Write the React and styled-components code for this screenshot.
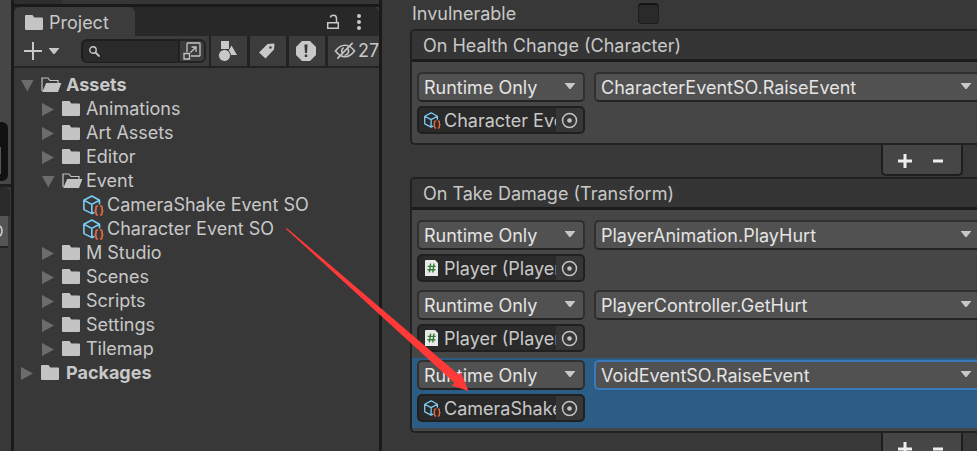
import React from "react";
import styled, { createGlobalStyle, css } from "styled-components";

const Global = createGlobalStyle`
  *, *::before, *::after { box-sizing: border-box; }
  html, body { margin: 0; background: #383838; }
  body { font-family: Inter, "Liberation Sans", sans-serif; font-size: 18px; line-height: 24px; color: #c8c8c8; overflow: hidden; }
  button, input, select { font: inherit; color: inherit; margin: 0; padding: 0; border: 0; background: none; }
  svg { display: block; flex: none; }
`;

const Editor = styled.div`
  position: relative;
  display: flex;
  height: 100vh;
  min-height: 0;
  overflow: hidden;
`;

/* neighbouring window on the far left */
const Dock = styled.aside`
  flex: none;
  width: 14px;
  border-right: 3px solid #1a1a1a;
  background: #383838;
  overflow: hidden;
`;
const DockView = styled.div`
  height: 187px;
  padding-top: 122px;
  background: #464646;
  border-bottom: 3px solid #1e1e1e;
`;
const DockBadge = styled.div`
  height: 59px;
  margin-right: 3px;
  padding-top: 25px;
  border-radius: 0 6px 6px 0;
  background: #111;
`;
const DockMark = styled.div`
  width: 1px;
  height: 27px;
  background: #555;
`;
const DockTab = styled.div`
  height: 29px;
  margin-right: 1px;
  border-radius: 0 6px 0 0;
  background: #2a2a2a;
`;
const DockTool = styled.div`
  display: flex;
  align-items: center;
  height: 32px;
  margin-right: 3px;
  border-bottom: 2px solid #222;
  background: #555;
`;

const Project = styled.section`
  display: flex;
  flex-direction: column;
  flex: 0 0 368px;
  min-width: 0;
  border-right: 3px solid #1a1a1a;
  background: #383838;
  overflow: hidden;
`;
const UpperEdge = styled.div`
  flex: none;
  height: 7px;
  background: linear-gradient(90deg, #2e2e2e 48px, #363636 48px);
  border-bottom: 3px solid #1a1a1a;
`;
const TabBar = styled.header`
  display: flex;
  flex: none;
  align-items: center;
  height: 29px;
  padding-right: 7px;
  background: #282828;
  border-radius: 0 6px 0 0;
`;
const Tab = styled.button`
  display: flex;
  align-items: center;
  gap: 6px;
  height: 29px;
  width: 121px;
  padding: 2px 0 0 11px;
  margin-right: auto;
  border-radius: 6px 6px 0 0;
  background: #3c3c3c;
`;
const PlainButton = styled.button`
  display: flex;
  align-items: center;
  justify-content: center;
  width: ${(p) => p.$w || 24}px;
  height: 24px;
`;
const Toolbar = styled.div`
  display: flex;
  flex: none;
  height: 32px;
  border-bottom: 2px solid #232323;
  background: #232323;
  overflow: hidden;
`;
const ToolGroup = styled.div`
  display: flex;
  align-items: center;
  flex: none;
  width: 195px;
  margin-right: 2px;
  padding-left: 10px;
  background: #3c3c3c;
`;
const AddButton = styled.button`
  display: flex;
  align-items: center;
  gap: 7px;
  width: 57px;
`;
const Search = styled.label`
  display: flex;
  align-items: center;
  width: 98px;
  height: 24px;
  padding-left: 6px;
  border: 2px solid #1e1e1e;
  border-width: 2px 1px 1px 2px;
  border-radius: 6px 0 0 6px;
  background: #2a2a2a;
`;
const SearchInput = styled.input`
  min-width: 0;
  width: 70px;
  outline: 0;
`;
const SearchScope = styled.button`
  display: flex;
  align-items: center;
  justify-content: center;
  width: 27px;
  height: 24px;
  border: 2px solid #232323;
  border-left-width: 1px;
  border-radius: 0 6px 6px 0;
`;
const ToolButton = styled.button`
  display: flex;
  flex: none;
  align-items: center;
  justify-content: center;
  width: 36px;
  margin-right: 3px;
  padding-right: 3px;
  background: #3c3c3c;
`;
const HiddenCount = styled(ToolButton)`
  flex: 1 1 0;
  justify-content: flex-start;
  gap: 2px;
  margin: 0;
  padding: 0 0 0 6px;
`;

const Tree = styled.ul`
  margin: 0;
  padding: 5px 0 0 7px;
  list-style: none;
`;
const TreeRow = styled.li`
  display: flex;
  align-items: center;
  height: 24px;
  padding-left: ${(p) => p.$depth * 21}px;
  font-weight: ${(p) => (p.$depth === 0 ? 700 : 400)};
  white-space: nowrap;
`;
const Slot = styled.span`
  display: flex;
  flex: none;
  align-items: center;
  width: 20px;
`;
const IconSlot = styled(Slot)`
  width: ${(p) => (p.$root ? 25 : 24)}px;
`;

const Inspector = styled.main`
  flex: 1;
  min-width: 0;
  padding-left: 28px;
  background: #383838;
  overflow: hidden;
`;
const Property = styled.label`
  display: grid;
  grid-template-columns: 226px 1fr;
  align-items: center;
  height: 27px;
  margin-bottom: 2px;
  padding-left: 2px;
`;
const Check = styled.input`
  appearance: none;
  width: 21px;
  height: 21px;
  border: 1px solid #1c1c1c;
  border-top: 2px solid #141414;
  border-radius: 4px;
  background: #2a2a2a;
`;
const EventBox = styled.section`
  border: 2px solid #212121;
  border-right: 0;
  border-radius: 5px 0 0 5px;
  background: #464646;
`;
const EventTitle = styled.h2`
  height: 31px;
  margin: 0;
  padding: 3px 0 0 11px;
  border-bottom: 3px solid #1c1c1c;
  border-radius: 3px 0 0 0;
  background: #353535;
  font-size: 18px;
  font-weight: 400;
  line-height: 24px;
`;
const EventList = styled.div`
  padding: 8px 0 3px;
`;
const EventRow = styled.div`
  display: grid;
  grid-template-columns: 168px 1fr;
  gap: 4px 9px;
  height: 70px;
  padding: 2px 0 6px 5px;
  background: ${(p) => (p.$selected ? "#2c5d87" : "transparent")};
`;
const SelectWrap = styled.span`
  display: grid;
  align-items: center;
  min-width: 0;
  height: 30px;
  border: 2px solid #303030;
  border-bottom-color: #242424;
  border-radius: 5px;
  background: #515151;
  color: #e4e4e4;
  ${(p) => p.$open && css`
    border-right: 0;
    border-radius: 5px 0 0 5px;
  `}
  ${(p) => p.$focused && css`
    border-color: #3a79bb;
  `}
  > * { grid-area: 1 / 1; }
  > svg { justify-self: end; margin: 0 ${(p) => (p.$open ? 6 : 8)}px 2px 0; pointer-events: none; }
`;
const Select = styled.select`
  appearance: none;
  width: 100%;
  height: 26px;
  padding: 1px 0 0 5px;
  outline: 0;
`;
const ObjectField = styled.div`
  display: flex;
  align-items: center;
  grid-column: 1;
  height: 28px;
  padding-left: 5px;
  border: 2px solid #202020;
  border-radius: 5px;
  background: #2a2a2a;
  overflow: hidden;
`;
const ObjectInput = styled.input`
  flex: 1;
  min-width: 0;
  height: 24px;
  margin-left: 3px;
  padding: 2px 0 0;
  outline: 0;
  cursor: pointer;
`;
const Picker = styled.button`
  display: flex;
  flex: none;
  align-items: center;
  justify-content: center;
  width: 27px;
  height: 24px;
  background: #373737;
`;
const EventFooter = styled.footer`
  display: flex;
  align-items: center;
  width: 82px;
  height: 31px;
  gap: 9px;
  margin: 0 14px 1px auto;
  padding: 2px 0 0 10px;
  border: 2px solid #1e1e1e;
  border-top: 0;
  border-radius: 0 0 5px 5px;
  background: #464646;
`;

/* drag arrow drawn over both windows */
const DragArrow = styled.svg`
  position: absolute;
  top: 0;
  left: 0;
  pointer-events: none;
`;

const Folder = () => (
  <svg width="18" height="16" viewBox="0 0 18 16">
    <path fill="#c4c4c4" d="M1 0h6.5l1.8 2.6H17a1 1 0 0 1 1 1V14a1 1 0 0 1-1 1H1a1 1 0 0 1-1-1V1a1 1 0 0 1 1-1z" />
  </svg>
);
const FolderOpen = () => (
  <svg width="21" height="16" viewBox="0 0 21 16">
    <path fill="none" stroke="#c4c4c4" d="M1 14V1h6l2 2.500h8V6" strokeWidth="1.200" />
    <path fill="#c4c4c4" d="M5.200 6H20.400L17 15H1.200z" />
  </svg>
);
const Fold = ({ open }) => (
  <svg width="13" height="14" viewBox="0 0 13 14">
    <path fill="#6c6c6c" d={open ? "M0 2h12.600L6.300 13.500z" : "M0 1l12 6.500L0 14z"} />
  </svg>
);
const Caret = () => (
  <svg width="10" height="6" viewBox="0 0 10 6">
    <path fill="#c8c8c8" d="M0 0h10v.6L5.600 6H4.400L0 .6z" />
  </svg>
);
const Asset = ({ size = 21 }) => (
  <svg width={size} height={size} viewBox="0 0 21 21" fill="none">
    <path stroke="#79cdf4" strokeWidth="1.600" strokeLinejoin="round" d="M11.500 17.300 9 18.600.9 14.600V5.300L8.800 1l7.700 4.300V9.500M.9 5.300 8.800 9.400l7.700-4.100M8.800 9.400v9" />
    <path stroke="#ef6a42" strokeWidth="1.600" d="M15 11h-.6q-1.400 0-1.400 1.400v2q0 1.200-1.400 1.200 1.400 0 1.400 1.200v1.800q0 1.400 1.400 1.400h.6M17 11h.6q1.400 0 1.400 1.400v2q0 1.200 1.400 1.200-1.400 0-1.400 1.200v1.800q0 1.400-1.400 1.400H17" />
  </svg>
);
const Script = () => (
  <svg width="17" height="17" viewBox="0 0 17 17">
    <path fill="#e8eae8" d="M2 0h9l3 3v12.500a.5.5 0 0 1-.5.5h-12a.5.5 0 0 1-.5-.5V1a1 1 0 0 1 1-1z" />
    <path stroke="#357a3c" strokeWidth="1.400" d="M6.600 3.500 5.400 12.500M10 3.500 8.800 12.500M3.700 6.400h8M3.400 9.700h8" />
  </svg>
);
const Target = () => (
  <svg width="17" height="17" viewBox="0 0 17 17">
    <circle cx="8.500" cy="8.500" r="7" fill="none" stroke="#c4c4c4" strokeWidth="1.500" />
    <circle cx="8.500" cy="8.500" r="2.300" fill="#c4c4c4" />
  </svg>
);

const tree = [
  [0, "Assets", "open"],
  [1, "Animations", "closed"],
  [1, "Art Assets", "closed"],
  [1, "Editor", "closed"],
  [1, "Event", "open"],
  [2, "CameraShake Event SO", "asset"],
  [2, "Character Event SO", "asset"],
  [1, "M Studio", "closed"],
  [1, "Scenes", "closed"],
  [1, "Scripts", "closed"],
  [1, "Settings", "closed"],
  [1, "Tilemap", "closed"],
  [0, "Packages", "closed"],
];

const events = [
  {
    title: "On Health Change (Character)",
    rows: [{ fn: "CharacterEventSO.RaiseEvent", object: "Character Event SO", kind: "asset" }],
  },
  {
    title: "On Take Damage (Transform)",
    rows: [
      { fn: "PlayerAnimation.PlayHurt", object: "Player (PlayerAnimation)", kind: "script" },
      { fn: "PlayerController.GetHurt", object: "Player (PlayerController)", kind: "script" },
      { fn: "VoidEventSO.RaiseEvent", object: "CameraShake Event SO", kind: "asset", selected: true },
    ],
  },
];

function Dropdown({ label, value, open, focused }) {
  return (
    <SelectWrap $open={open} $focused={focused}>
      <Select aria-label={label} defaultValue={value}>
        <option>{value}</option>
      </Select>
      <Caret />
    </SelectWrap>
  );
}

function ProjectWindow() {
  return (
    <Project>
      <UpperEdge />
      <TabBar>
        <Tab><Folder />Project</Tab>
        <PlainButton aria-label="Lock">
          <svg width="14" height="16" viewBox="0 0 14 16" fill="none" stroke="#c8c8c8" strokeWidth="1.500">
            <path d="M1.700 8.800h10.600v5.400H1.700zM10.500 8V4.500Q10.500 1.200 7.500 1.200T4.500 3.500" />
          </svg>
        </PlainButton>
        <PlainButton aria-label="Window menu" $w={27}>
          <svg width="4" height="16" viewBox="0 0 4 16" fill="#c8c8c8">
            <circle cx="2" cy="2" r="2" /><circle cx="2" cy="8" r="2" /><circle cx="2" cy="14" r="2" />
          </svg>
        </PlainButton>
      </TabBar>
      <Toolbar>
        <ToolGroup>
          <AddButton aria-label="Create">
            <svg width="18" height="18" viewBox="0 0 18 18"><path stroke="#c8c8c8" strokeWidth="2" d="M9 0v18M0 9h18" /></svg>
            <Caret />
          </AddButton>
          <Search>
            <svg width="11" height="11" viewBox="0 0 11 11" fill="none" stroke="#c8c8c8">
              <circle cx="4" cy="4" r="3.200" strokeWidth="1.400" /><path strokeWidth="1.800" d="m6.500 6.500 4 4" />
            </svg>
            <SearchInput type="text" aria-label="Search assets" />
          </Search>
          <SearchScope aria-label="Open in search">
            <svg width="18" height="18" viewBox="0 0 18 18" fill="none" stroke="#c4c4c4" strokeWidth="1.300">
              <path d="M4 10V1.700Q4 1 4.700 1h11.600Q17 1 17 1.700v11.600q0 .7-.7.700H8M1 11.500h5.500V17H1zM7.500 10.500 13 5M8.500 5H13v5" />
            </svg>
          </SearchScope>
        </ToolGroup>
        <ToolButton aria-label="Filter by type">
          <svg width="20" height="20" viewBox="0 0 20 20" fill="#c8c8c8">
            <path d="M3 0h8v8H3zM13.500 4.500 19 14h-6.500L10.500 10z" />
            <circle cx="6.500" cy="14.500" r="6" stroke="#3c3c3c" strokeWidth="1" />
          </svg>
        </ToolButton>
        <ToolButton aria-label="Filter by label">
          <svg width="16" height="16" viewBox="0 0 16 16" fill="#c8c8c8">
            <path fillRule="evenodd" d="M8.500 1 14.600.500q.900 0 .900.900L15 6.500 6.500 15.500 0 9.500zM11.500 3.200a1.300 1.300 0 1 0 0 2.600 1.300 1.300 0 0 0 0-2.600z" />
          </svg>
        </ToolButton>
        <ToolButton aria-label="Filter by log">
          <svg width="20" height="20" viewBox="0 0 20 20">
            <path fill="#c8c8c8" d="M6 0h8l6 6v8l-6 6H6l-6-6V6z" />
            <path fill="#383838" d="M8.400 3.500h3.200l-.6 8.500H9zM8.800 13.500h2.400V16H8.800z" />
          </svg>
        </ToolButton>
        <HiddenCount aria-label="Hidden packages: 27">
          <svg width="22" height="18" viewBox="0 0 23 18" fill="none" stroke="#c4c4c4" strokeWidth="1.700">
            <path d="M1.500 9Q6 3 11.500 3T21.500 9Q17 15 11.500 15T1.500 9zM3.500 17 19.500.5" />
            <path d="M9 11.500A4.500 4.500 0 0 1 10 5.500M14.500 6.500A4.500 4.500 0 0 1 11 13.500" />
          </svg>
          27
        </HiddenCount>
      </Toolbar>
      <Tree>
        {tree.map(([depth, name, kind]) => (
          <TreeRow key={name} $depth={depth}>
            <Slot>{kind !== "asset" && <Fold open={kind === "open"} />}</Slot>
            <IconSlot $root={depth === 0}>
              {kind === "asset" ? <Asset /> : kind === "open" ? <FolderOpen /> : <Folder />}
            </IconSlot>
            {name}
          </TreeRow>
        ))}
      </Tree>
    </Project>
  );
}

function InspectorWindow() {
  return (
    <Inspector>
      <Property>
        Invulnerable
        <Check type="checkbox" />
      </Property>
      {events.map((event) => (
        <React.Fragment key={event.title}>
          <EventBox>
            <EventTitle>{event.title}</EventTitle>
            <EventList>
              {event.rows.map((row) => (
                <EventRow key={row.fn} $selected={row.selected}>
                  <Dropdown label="Call state" value="Runtime Only" />
                  <Dropdown label="Function" value={row.fn} open focused={row.selected} />
                  <ObjectField>
                    {row.kind === "asset" ? <Asset size={17} /> : <Script />}
                    <ObjectInput aria-label="Target object" readOnly value={row.object} />
                    <Picker aria-label="Pick object"><Target /></Picker>
                  </ObjectField>
                </EventRow>
              ))}
            </EventList>
          </EventBox>
          <EventFooter>
            <PlainButton aria-label="Add listener">
              <svg width="14" height="14" viewBox="0 0 14 14"><path stroke="#eee" strokeWidth="3" d="M7 0v14M0 7h14" /></svg>
            </PlainButton>
            <PlainButton aria-label="Remove listener">
              <svg width="10" height="14" viewBox="0 0 10 14"><path stroke="#eee" strokeWidth="3" d="M0 7h10" /></svg>
            </PlainButton>
          </EventFooter>
        </React.Fragment>
      ))}
    </Inspector>
  );
}

export default function App() {
  return (
    <Editor>
      <Global />
      <Dock>
        <DockView><DockBadge><DockMark /></DockBadge></DockView>
        <DockTab />
        <DockTool>
          <svg width="3" height="14" viewBox="0 0 3 14">
            <path fill="none" stroke="#d0d0d0" strokeWidth="1.500" d="M-1 1.500Q2 3 2 7t-3 5.500" />
          </svg>
        </DockTool>
      </Dock>
      <ProjectWindow />
      <InspectorWindow />
      <DragArrow width="480" height="400" viewBox="0 0 480 400">
        <path fill="#ff3838" d="M286 229 286.800 228 458.500 374.500 461 372.500 468.500 391 451.500 385.500 454.500 383z" />
      </DragArrow>
    </Editor>
  );
}
